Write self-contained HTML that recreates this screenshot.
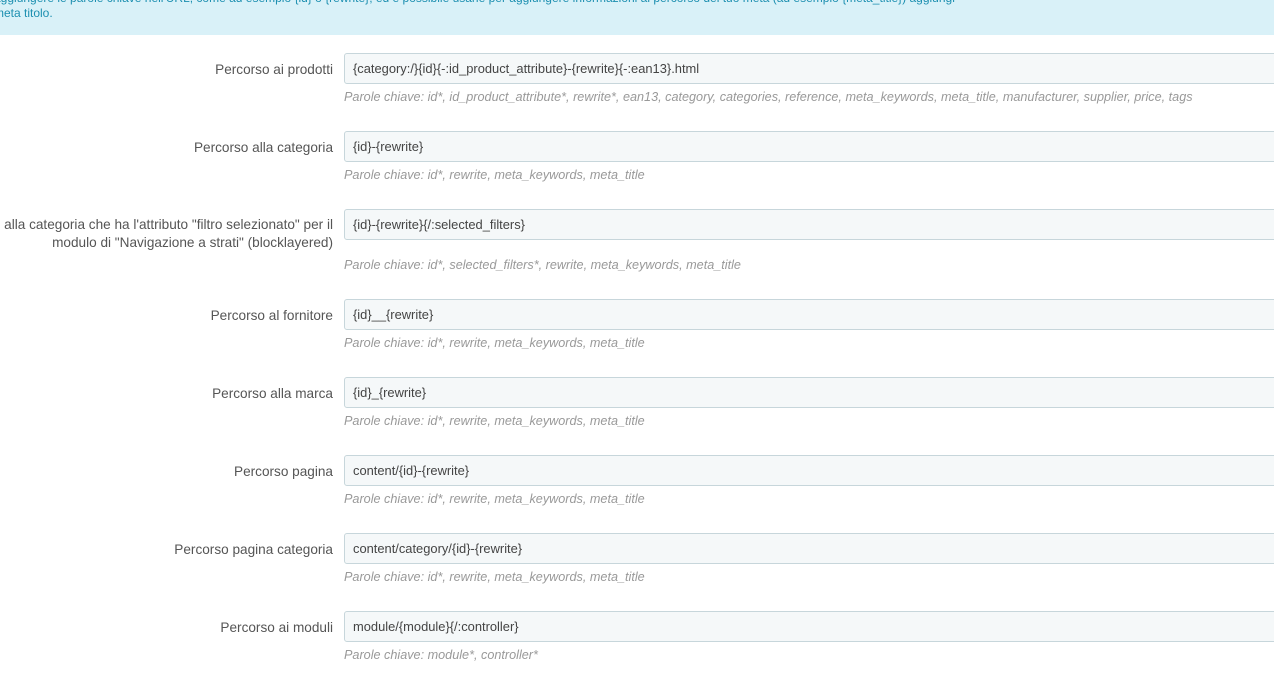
<!DOCTYPE html>
<html><head><style>
body{margin:0;width:1274px;height:682px;overflow:hidden;background:#fff;font-family:"Liberation Sans",sans-serif;font-size:13px;color:#555}
.banner{position:absolute;left:0;top:0;width:1274px;height:35px;background:#d9f1f8;color:#1c8fb0;font-size:12px}
.banner div{position:absolute;left:-6px;white-space:nowrap}
.lab{position:absolute;right:941px;text-align:right;color:#555;font-size:13.6px;line-height:18px;white-space:nowrap}
.inp{position:absolute;left:344px;width:940px;height:31px;box-sizing:border-box;background:#f5f8f9;border:1px solid #c7d6db;border-radius:3px;padding-left:8px;line-height:29px;color:#444;font-size:12.9px}
.help{position:absolute;left:344px;font-style:italic;color:#999;font-size:12.65px;white-space:nowrap}
</style></head><body>
<div class="banner"><div style="top:-9px">aggiungere le parole chiave nell'URL, come ad esempio {id} o {rewrite}, ed è possibile usarle per aggiungere informazioni al percorso del tuo meta (ad esempio {meta_title}) aggiungi</div><div style="top:6px">meta titolo.</div></div>

<div class="lab" style="top:61px">Percorso ai prodotti</div>
<div class="inp" style="top:53px">{category:/}{id}{-:id_product_attribute}-{rewrite}{-:ean13}.html</div>
<div class="help" style="top:90px">Parole chiave: id*, id_product_attribute*, rewrite*, ean13, category, categories, reference, meta_keywords, meta_title, manufacturer, supplier, price, tags</div>

<div class="lab" style="top:139px">Percorso alla categoria</div>
<div class="inp" style="top:131px">{id}-{rewrite}</div>
<div class="help" style="top:168px">Parole chiave: id*, rewrite, meta_keywords, meta_title</div>

<div class="lab" style="top:216px">Percorso alla categoria che ha l'attributo "filtro selezionato" per il<br>modulo di "Navigazione a strati" (blocklayered)</div>
<div class="inp" style="top:209px">{id}-{rewrite}{/:selected_filters}</div>
<div class="help" style="top:258px">Parole chiave: id*, selected_filters*, rewrite, meta_keywords, meta_title</div>

<div class="lab" style="top:307px">Percorso al fornitore</div>
<div class="inp" style="top:299px">{id}__{rewrite}</div>
<div class="help" style="top:336px">Parole chiave: id*, rewrite, meta_keywords, meta_title</div>

<div class="lab" style="top:385px">Percorso alla marca</div>
<div class="inp" style="top:377px">{id}_{rewrite}</div>
<div class="help" style="top:414px">Parole chiave: id*, rewrite, meta_keywords, meta_title</div>

<div class="lab" style="top:463px">Percorso pagina</div>
<div class="inp" style="top:455px">content/{id}-{rewrite}</div>
<div class="help" style="top:492px">Parole chiave: id*, rewrite, meta_keywords, meta_title</div>

<div class="lab" style="top:541px">Percorso pagina categoria</div>
<div class="inp" style="top:533px">content/category/{id}-{rewrite}</div>
<div class="help" style="top:570px">Parole chiave: id*, rewrite, meta_keywords, meta_title</div>

<div class="lab" style="top:619px">Percorso ai moduli</div>
<div class="inp" style="top:611px">module/{module}{/:controller}</div>
<div class="help" style="top:648px">Parole chiave: module*, controller*</div>
</body></html>
